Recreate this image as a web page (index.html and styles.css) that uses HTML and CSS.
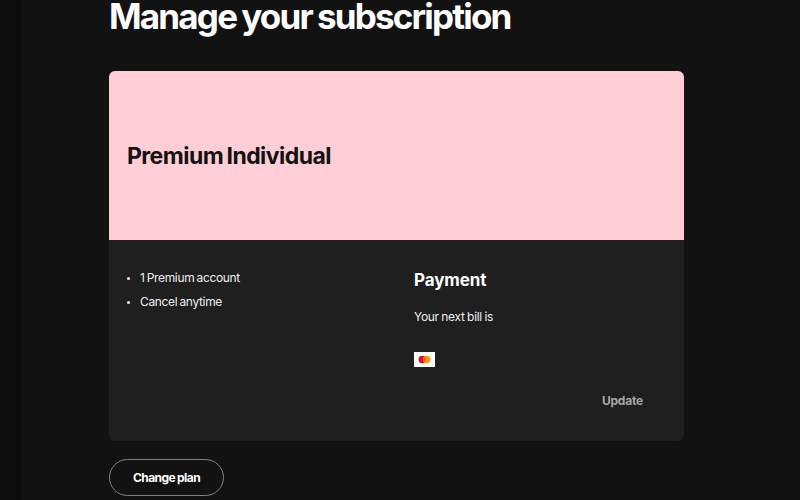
FILE: index.html
```html
<!DOCTYPE html>
<html lang="en">
<head>
  <meta charset="UTF-8" />
  <title>Manage your subscription</title>
  <link rel="stylesheet" href="styles.css">
</head>
<body>
  <div class="side-strip"></div>

  <main class="content">
    <h1>Manage your subscription</h1>

    <section class="plan-card">
      <div class="plan-header">
        <h2>Premium Individual</h2>
      </div>
      <div class="plan-body">
        <ul class="plan-features">
          <li>1 Premium account</li>
          <li>Cancel anytime</li>
        </ul>
        <div class="payment">
          <h3>Payment</h3>
          <p>Your next bill is</p>
          <div class="card-row">
            <svg class="card-icon" width="21" height="15" viewBox="0 0 21 15">
              <rect width="21" height="15" fill="#fff" />
              <circle cx="8.2" cy="7.5" r="3.7" fill="#e8101e" />
              <circle cx="12.8" cy="7.5" r="3.7" fill="#f79e1b" />
              <path d="M10.5 4.6a3.7 3.7 0 0 1 0 5.8a3.7 3.7 0 0 1 0-5.8z" fill="#f4600c" />
            </svg>
          </div>
          <a class="update" href="#">Update</a>
        </div>
      </div>
    </section>

    <a class="btn-outline" href="#">Change plan</a>
  </main>
</body>
</html>
```

FILE: styles.css
```css
* {
  margin: 0;
  padding: 0;
  box-sizing: border-box;
}

body {
  width: 800px;
  height: 500px;
  overflow: hidden;
  display: flex;
  background: #121212;
  color: #fff;
  font-family: Inter, "Liberation Sans", sans-serif;
}

a {
  text-decoration: none;
}

.side-strip {
  width: 21px;
  background: #0c0c0c;
}

.content {
  width: 575px;
  margin-left: 88px;
}

h1 {
  font-size: 35px;
  line-height: 32px;
  font-weight: 700;
  letter-spacing: -1.8px;
  word-spacing: -1.5px;
  margin-bottom: 39px;
}

.plan-card {
  background: #1f1f1f;
  border-radius: 6px;
  overflow: hidden;
  height: 370px;
}

.plan-header {
  height: 169px;
  padding: 0 18px;
  display: flex;
  align-items: center;
  background: #ffcdd5;
  color: #121212;
}

.plan-header h2 {
  font-size: 23px;
  font-weight: 700;
  letter-spacing: -0.55px;
  word-spacing: -1.5px;
}

.plan-body {
  display: flex;
  padding: 29px 18px 0;
}

.plan-features {
  width: 287px;
  padding: 1px 0 0 13px;
  list-style: none;
  font-size: 12px;
  letter-spacing: -0.35px;
  word-spacing: -0.8px;
  color: #eee;
}

.plan-features li {
  position: relative;
  margin-bottom: 9px;
  line-height: 15px;
}

/* small round bullet */
.plan-features li::before {
  content: "";
  position: absolute;
  left: -13px;
  top: 7px;
  width: 3px;
  height: 3px;
  border-radius: 50%;
  background: #eee;
}

.payment {
  flex: 1;
  display: flex;
  flex-direction: column;
}

.payment h3 {
  font-size: 17px;
  line-height: 22px;
  font-weight: 700;
  letter-spacing: -0.1px;
  margin-bottom: 18px;
}

.payment p {
  font-size: 12px;
  line-height: 15px;
  letter-spacing: -0.3px;
  word-spacing: -0.6px;
  color: #eee;
  margin-bottom: 28px;
}

.card-row {
  display: flex;
  height: 15px;
  margin-bottom: 26px;
}

.update {
  align-self: flex-end;
  margin-right: 23px;
  font-size: 12px;
  line-height: 16px;
  font-weight: 700;
  letter-spacing: -0.2px;
  color: #a7a7a7;
}

.btn-outline {
  display: inline-block;
  width: 115px;
  height: 37px;
  margin-top: 18px;
  border: 1px solid #818181;
  border-radius: 19px;
  text-align: center;
  font-size: 12px;
  line-height: 35px;
  font-weight: 700;
  letter-spacing: -0.55px;
  word-spacing: -0.4px;
  color: #fff;
}
```
